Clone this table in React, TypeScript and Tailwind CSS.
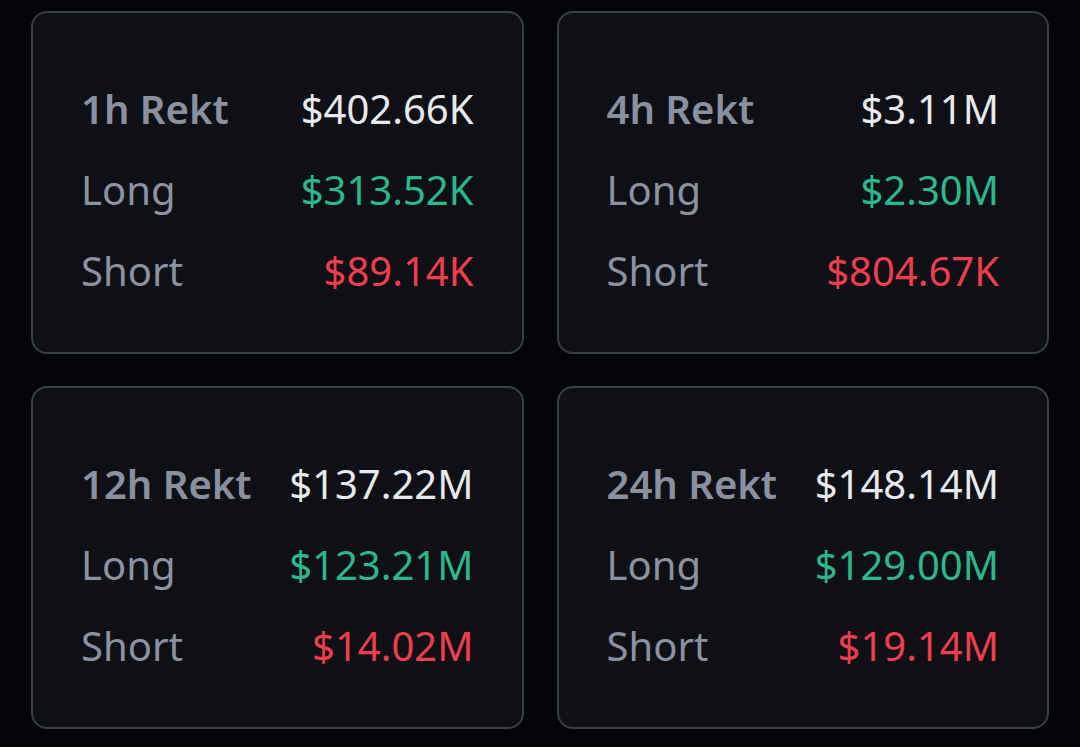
import React from 'react'

type Stat = {
  label: string
  total: string
  long: string
  short: string
}

const stats: Stat[] = [
  { label: '1h Rekt', total: '$402.66K', long: '$313.52K', short: '$89.14K' },
  { label: '4h Rekt', total: '$3.11M', long: '$2.30M', short: '$804.67K' },
  { label: '12h Rekt', total: '$137.22M', long: '$123.21M', short: '$14.02M' },
  { label: '24h Rekt', total: '$148.14M', long: '$129.00M', short: '$19.14M' },
]

function RektCard({ stat }: { stat: Stat }) {
  return (
    <div className="h-[343px] rounded-[16px] border-2 border-[#3a3e46] bg-[#0e1016] px-[48px] pt-[55px]">
      <div className="flex flex-col">
        <div className="flex h-[81px] items-center justify-between">
          <span className="font-semibold text-[#8a90a0]">{stat.label}</span>
          <span className="text-[#e8eaee]">{stat.total}</span>
        </div>
        <div className="flex h-[81px] items-center justify-between">
          <span className="text-[#8c92a1]">Long</span>
          <span className="text-[#2bb88b]">{stat.long}</span>
        </div>
        <div className="flex h-[81px] items-center justify-between">
          <span className="text-[#8c92a1]">Short</span>
          <span className="text-[#f03e4f]">{stat.short}</span>
        </div>
      </div>
    </div>
  )
}

export default function App() {
  return (
    <div
      className="min-h-screen w-[1080px] bg-[#030407] px-[31px] pt-[11px] text-[40px] leading-none"
      style={{ fontFamily: '"Noto Sans", Inter, sans-serif' }}
    >
      <div className="grid grid-cols-2 gap-x-[33px] gap-y-[32px]">
        {stats.map((s) => (
          <RektCard key={s.label} stat={s} />
        ))}
      </div>
    </div>
  )
}
